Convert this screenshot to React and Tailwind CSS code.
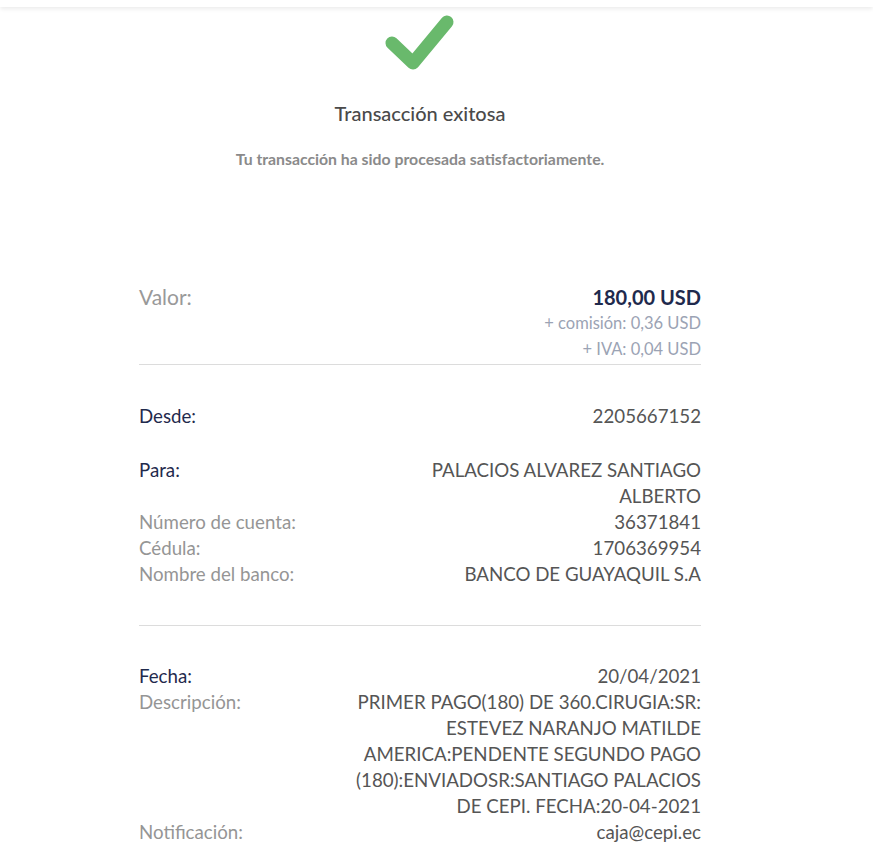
function Row({ label, labelTone = "muted", children, className = "" }) {
  return (
    <div className={`flex justify-between items-start ${className}`}>
      <span
        className={
          labelTone === "dark" ? "text-[#1f2a4d]" : "text-[#959595]"
        }
      >
        {label}
      </span>
      <span className="w-[350px] text-right text-[#555555]">{children}</span>
    </div>
  );
}

function CheckIcon() {
  return (
    <svg width="80" height="64" viewBox="0 0 80 64">
      <polyline
        points="12,33 33,53 67,12"
        fill="none"
        stroke="#69b96c"
        strokeWidth="13"
        strokeLinecap="round"
        strokeLinejoin="round"
      />
    </svg>
  );
}

export default function App() {
  return (
    <div className="min-h-[865px] bg-white font-['Lato',sans-serif]">
      <div className="h-[7px] bg-white shadow-[0_2px_4px_rgba(0,0,0,0.08)]" />
      <div className="w-[840px] flex flex-col items-center">
        <div className="mt-[3px]">
          <CheckIcon />
        </div>
        <h1 className="mt-[25px] text-[20px] leading-[28px] font-medium text-[#4a4a4a]">
          Transacción exitosa
        </h1>
        <p className="mt-[21px] text-[15.8px] leading-[22px] font-bold text-[#8a8a8a]">
          Tu transacción ha sido procesada satisfactoriamente.
        </p>

        <div className="w-[562px] mt-[114px] text-[18.7px] leading-[26px]">
          <div className="flex justify-between items-start pb-[2px] border-b border-[#dcdcdc]">
            <span className="text-[21px] text-[#999999]">Valor:</span>
            <div className="text-right">
              <div className="text-[20px] font-bold text-[#1f2a4d]">180,00 USD</div>
              <div className="text-[16.5px] text-[#9ba3b4]">+ comisión: 0,36 USD</div>
              <div className="text-[16.5px] text-[#9ba3b4]">+ IVA: 0,04 USD</div>
            </div>
          </div>

          <Row label="Desde:" labelTone="dark" className="mt-[38px]">
            2205667152
          </Row>
          <Row label="Para:" labelTone="dark" className="mt-[28px]">
            PALACIOS ALVAREZ SANTIAGO ALBERTO
          </Row>
          <Row label="Número de cuenta:">36371841</Row>
          <Row label="Cédula:">1706369954</Row>
          <Row label="Nombre del banco:">BANCO DE GUAYAQUIL S.A</Row>

          <div className="mt-[38px] border-t border-[#dcdcdc]" />

          <Row label="Fecha:" labelTone="dark" className="mt-[37px]">
            20/04/2021
          </Row>
          <Row label="Descripción:">
            PRIMER PAGO(180) DE 360.CIRUGIA:SR: ESTEVEZ NARANJO MATILDE
            AMERICA:PENDENTE SEGUNDO PAGO (180):ENVIADOSR:SANTIAGO PALACIOS
            DE CEPI. FECHA:20-04-2021
          </Row>
          <Row label="Notificación:">caja@cepi.ec</Row>
        </div>
      </div>
    </div>
  );
}
